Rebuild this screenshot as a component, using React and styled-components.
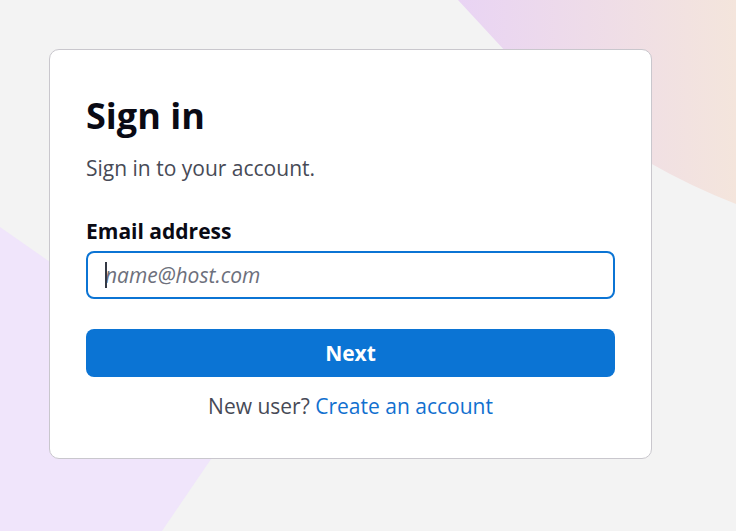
import React from "react";
import styled, { createGlobalStyle } from "styled-components";

const Global = createGlobalStyle`
  html, body { margin: 0; padding: 0; }
  body {
    background: #f3f3f3;
    font-family: "Open Sans", "Noto Sans", sans-serif;
    min-height: 531px;
    overflow: hidden;
  }
`;

const Page = styled.div`
  position: relative;
  width: 736px;
  height: 531px;
  padding: 49px 0 0 49px;
  box-sizing: border-box;
`;

const Backdrop = styled.svg`
  position: absolute;
  inset: 0;
  width: 736px;
  height: 531px;
  z-index: 0;
`;

const Card = styled.div`
  position: relative;
  z-index: 1;
  width: 603px;
  box-sizing: border-box;
  background: #ffffff;
  border: 1px solid #c9c7cd;
  border-radius: 10px;
  padding: 44px 36px 38px 36px;
  display: flex;
  flex-direction: column;
`;

const Title = styled.h1`
  margin: 0;
  font-size: 36px;
  line-height: 44px;
  font-weight: 700;
  color: #0a0a14;
`;

const Subtitle = styled.p`
  margin: 16px 0 0;
  font-size: 21px;
  line-height: 28px;
  color: #474a56;
`;

const Label = styled.label`
  margin-top: 35px;
  font-size: 21px;
  line-height: 28px;
  font-weight: 700;
  color: #0a0a14;
`;

const Field = styled.div`
  position: relative;
  margin-top: 6px;
  display: flex;
`;

const Input = styled.input`
  flex: 1;
  height: 48px;
  box-sizing: border-box;
  border: 2px solid #0b74d4;
  border-radius: 8px;
  padding: 0 17px;
  font-family: "Open Sans", "Noto Sans", sans-serif;
  font-size: 21px;
  color: #1a1a1a;
  outline: none;
  background: #fff;
  &::placeholder {
    font-style: italic;
    color: #6d707c;
  }
`;

const Caret = styled.span`
  position: absolute;
  left: 19px;
  top: 11px;
  width: 2px;
  height: 26px;
  background: #333844;
`;

const Button = styled.button`
  margin-top: 30px;
  height: 48px;
  border: none;
  border-radius: 8px;
  background: #0b74d4;
  color: #ffffff;
  font-family: "Open Sans", "Noto Sans", sans-serif;
  font-size: 21px;
  font-weight: 700;
  cursor: pointer;
`;

const Footer = styled.p`
  margin: 15px 0 0;
  text-align: center;
  font-size: 21px;
  line-height: 28px;
  color: #474a56;
`;

const Link = styled.a`
  color: #1170cf;
  text-decoration: none;
`;

export default function App() {
  return (
    <>
      <Global />
      <Page>
        <Backdrop viewBox="0 0 736 531" aria-hidden="true">
          <defs>
            <linearGradient id="tr" x1="458" y1="0" x2="736" y2="0" gradientUnits="userSpaceOnUse">
              <stop offset="0" stopColor="#e9d4f4" />
              <stop offset="1" stopColor="#f4e5dc" />
            </linearGradient>
          </defs>
          <path d="M458 0 L736 0 L736 204 Q690 186 650 163 L577 129 Z" fill="url(#tr)" />
          <path d="M0 227 L250 402 L162 531 L0 531 Z" fill="#f0e5fb" />
        </Backdrop>
        <Card>
          <Title>Sign in</Title>
          <Subtitle>Sign in to your account.</Subtitle>
          <Label htmlFor="email">Email address</Label>
          <Field>
            <Input id="email" type="email" placeholder="name@host.com" />
            <Caret />
          </Field>
          <Button type="button">Next</Button>
          <Footer>
            New user? <Link href="#">Create an account</Link>
          </Footer>
        </Card>
      </Page>
    </>
  );
}
